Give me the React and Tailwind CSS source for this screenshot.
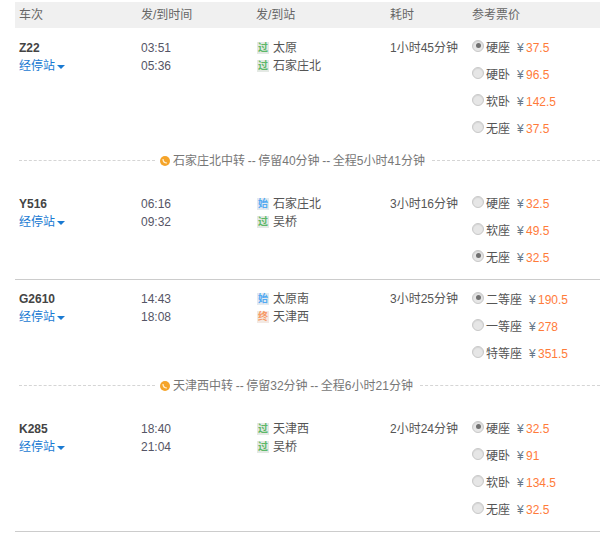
const FONT = 'font-["Liberation_Sans","Noto_Sans_CJK_SC",sans-serif]';

const BADGES = {
  过: "text-[#5cb868] bg-[#e4e9e4]",
  始: "text-[#55aaf2] bg-[#e3eaf0]",
  终: "text-[#f79a66] bg-[#f3e9e3]",
};

const SEGMENTS = [
  {
    train: "Z22",
    dep: "03:51",
    arr: "05:36",
    stations: [["过", "太原"], ["过", "石家庄北"]],
    dur: "1小时45分钟",
    fares: [["硬座", "37.5", true], ["硬卧", "96.5"], ["软卧", "142.5"], ["无座", "37.5"]],
    transfer: "石家庄北中转 -- 停留40分钟 -- 全程5小时41分钟",
  },
  {
    train: "Y516",
    dep: "06:16",
    arr: "09:32",
    stations: [["始", "石家庄北"], ["过", "吴桥"]],
    dur: "3小时16分钟",
    fares: [["硬座", "32.5"], ["软座", "49.5"], ["无座", "32.5", true]],
  },
  {
    train: "G2610",
    dep: "14:43",
    arr: "18:08",
    stations: [["始", "太原南"], ["终", "天津西"]],
    dur: "3小时25分钟",
    fares: [["二等座", "190.5", true], ["一等座", "278"], ["特等座", "351.5"]],
    transfer: "天津西中转 -- 停留32分钟 -- 全程6小时21分钟",
    tight: true,
  },
  {
    train: "K285",
    dep: "18:40",
    arr: "21:04",
    stations: [["过", "天津西"], ["过", "吴桥"]],
    dur: "2小时24分钟",
    fares: [["硬座", "32.5", true], ["硬卧", "91"], ["软卧", "134.5"], ["无座", "32.5"]],
  },
];

function Radio({ on }) {
  return (
    <span className="mb-[4px] flex h-[12px] w-[12px] shrink-0 items-center justify-center rounded-full border border-[#c8c8c8] bg-[#e6e6e6] shadow-[inset_0_1px_1px_#d4d4d4]">
      {on && <span className="h-[5px] w-[5px] rounded-full bg-[#707070]" />}
    </span>
  );
}

function Row({ s }) {
  const top = s.tight ? "pt-[10px]" : "pt-[11px]";
  return (
    <div
      className={`grid grid-cols-[122px_115px_134px_82px_1fr] pl-[4px] ${
        s.transfer ? "" : "border-b border-[#cccccc] pb-[8px]"
      }`}
    >
      <div className={top}>
        <div className="h-[18px] text-[12px] font-bold leading-[18px] text-[#444444]">{s.train}</div>
        <div className="flex h-[18px] items-center gap-[2px] text-[12px] leading-[18px] text-[#1a7ad2]">
          经停站
          <span className="mt-[2px] h-0 w-0 border-x-[4px] border-t-[4px] border-x-transparent border-t-[#1a7ad2]" />
        </div>
      </div>
      <div className={`text-[12px] leading-[18px] text-[#555566] ${top}`}>
        <div>{s.dep}</div>
        <div>{s.arr}</div>
      </div>
      <div className={top}>
        {s.stations.map(([b, name]) => (
          <div key={name} className="flex h-[18px] items-center text-[12px] leading-[18px] text-[#555555]">
            <span
              className={`ml-[1px] mr-[4px] flex h-[12px] w-[12px] items-center justify-center text-[10px] font-bold leading-none ${BADGES[b]}`}
            >
              {b}
            </span>
            {name}
          </div>
        ))}
      </div>
      <div className={`text-[12px] leading-[18px] text-[#555555] ${top}`}>{s.dur}</div>
      <div className="pt-[6px]">
        {s.fares.map(([seat, price, on]) => (
          <div key={seat} className="flex h-[27px] items-center text-[12px]">
            <Radio on={on} />
            <span className="ml-[2px] mr-[7px] whitespace-nowrap text-[#555555]">{seat}</span>
            <span className="w-[9px] text-[#667788]">¥</span>
            <span className="text-[#ff7b3a]">{price}</span>
          </div>
        ))}
      </div>
    </div>
  );
}

function Transfer({ text }) {
  return (
    <div className="mb-[6px] flex h-[36px] items-center pl-[4px] text-[12px] text-[#777777]">
      <span className="w-[136px] border-t border-dashed border-[#d5d5d5]" />
      <svg className="ml-[5px] mr-[3px] mt-[2px] shrink-0" width="10" height="10" viewBox="0 0 10 10">
        <circle cx="5" cy="5" r="5" fill="#f5a42a" />
        <path d="M3 3 C3 5.5 4.5 7 7 7" fill="none" stroke="#fff2d8" strokeWidth="1.2" />
      </svg>
      <span className="whitespace-nowrap pt-[2px] [word-spacing:-0.7px]">{text}</span>
      <span className="ml-[7px] flex-1 border-t border-dashed border-[#d5d5d5]" />
    </div>
  );
}

export default function App() {
  return (
    <div className={`h-[535px] w-[600px] overflow-hidden bg-white pl-[15px] pt-[2px] ${FONT}`}>
      <div className="grid h-[26px] grid-cols-[122px_115px_134px_82px_1fr] items-center bg-[#f0f0f0] pl-[4px] text-[12px] text-[#666666]">
        <span>车次</span>
        <span>发/到时间</span>
        <span>发/到站</span>
        <span>耗时</span>
        <span>参考票价</span>
      </div>
      {SEGMENTS.map((s) => (
        <div key={s.train}>
          <Row s={s} />
          {s.transfer && <Transfer text={s.transfer} />}
        </div>
      ))}
    </div>
  );
}
